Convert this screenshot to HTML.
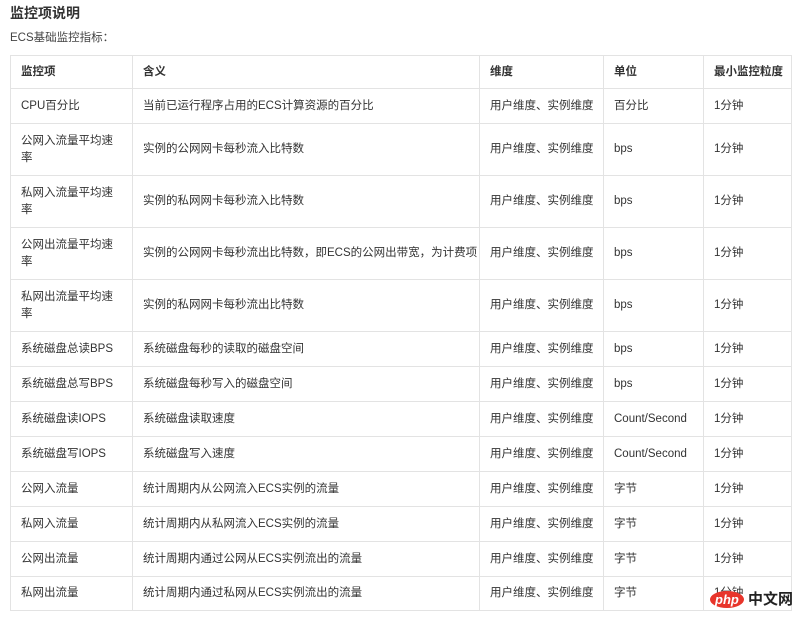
<!DOCTYPE html>
<html><head><meta charset="utf-8"><style>
body{margin:0;width:800px;height:619px;background:#fff;font-family:"Liberation Sans","Noto Sans CJK SC",sans-serif;color:#333;position:relative;overflow:hidden}
h3{position:absolute;left:10px;top:3px;margin:0;font-size:14px;font-weight:bold;color:#333}
.p{position:absolute;left:10px;top:29px;font-size:11.5px;color:#444}
table{position:absolute;left:10px;top:55px;border-collapse:collapse;font-size:11.5px;width:781px;table-layout:fixed}
td,th{border:1px solid #e3e3e3;padding:0 10px;text-align:left;vertical-align:middle;line-height:17px;white-space:nowrap;overflow:hidden}
td:first-child{white-space:normal}
th{font-weight:bold}
tr.h{height:33px}
tr.s{height:35px}
tr.t{height:52px}
tr.l{height:34px}
.logo{position:absolute;left:710px;top:588px;font-size:15px;font-weight:bold}
</style></head><body>
<h3>监控项说明</h3>
<div class="p">ECS基础监控指标：</div>
<table>
<colgroup><col style="width:122px"><col style="width:347px"><col style="width:124px"><col style="width:100px"><col style="width:88px"></colgroup>
<tr class="h"><th>监控项</th><th>含义</th><th>维度</th><th>单位</th><th>最小监控粒度</th></tr>
<tr class="s"><td>CPU百分比</td><td>当前已运行程序占用的ECS计算资源的百分比</td><td>用户维度、实例维度</td><td>百分比</td><td>1分钟</td></tr>
<tr class="t"><td>公网入流量平均速率</td><td>实例的公网网卡每秒流入比特数</td><td>用户维度、实例维度</td><td>bps</td><td>1分钟</td></tr>
<tr class="t"><td>私网入流量平均速率</td><td>实例的私网网卡每秒流入比特数</td><td>用户维度、实例维度</td><td>bps</td><td>1分钟</td></tr>
<tr class="t"><td>公网出流量平均速率</td><td>实例的公网网卡每秒流出比特数，即ECS的公网出带宽，为计费项</td><td>用户维度、实例维度</td><td>bps</td><td>1分钟</td></tr>
<tr class="t"><td>私网出流量平均速率</td><td>实例的私网网卡每秒流出比特数</td><td>用户维度、实例维度</td><td>bps</td><td>1分钟</td></tr>
<tr class="s"><td>系统磁盘总读BPS</td><td>系统磁盘每秒的读取的磁盘空间</td><td>用户维度、实例维度</td><td>bps</td><td>1分钟</td></tr>
<tr class="s"><td>系统磁盘总写BPS</td><td>系统磁盘每秒写入的磁盘空间</td><td>用户维度、实例维度</td><td>bps</td><td>1分钟</td></tr>
<tr class="s"><td>系统磁盘读IOPS</td><td>系统磁盘读取速度</td><td>用户维度、实例维度</td><td>Count/Second</td><td>1分钟</td></tr>
<tr class="s"><td>系统磁盘写IOPS</td><td>系统磁盘写入速度</td><td>用户维度、实例维度</td><td>Count/Second</td><td>1分钟</td></tr>
<tr class="s"><td>公网入流量</td><td>统计周期内从公网流入ECS实例的流量</td><td>用户维度、实例维度</td><td>字节</td><td>1分钟</td></tr>
<tr class="s"><td>私网入流量</td><td>统计周期内从私网流入ECS实例的流量</td><td>用户维度、实例维度</td><td>字节</td><td>1分钟</td></tr>
<tr class="s"><td>公网出流量</td><td>统计周期内通过公网从ECS实例流出的流量</td><td>用户维度、实例维度</td><td>字节</td><td>1分钟</td></tr>
<tr class="l"><td>私网出流量</td><td>统计周期内通过私网从ECS实例流出的流量</td><td>用户维度、实例维度</td><td>字节</td><td>1分钟</td></tr>
</table>
<div class="logo"><span style="display:inline-block;background:#e8352b;color:#fff;border-radius:50%;padding:1px 5px;font-size:13px;font-style:italic">php</span> <span style="color:#222">中文网</span></div>
</body></html>
